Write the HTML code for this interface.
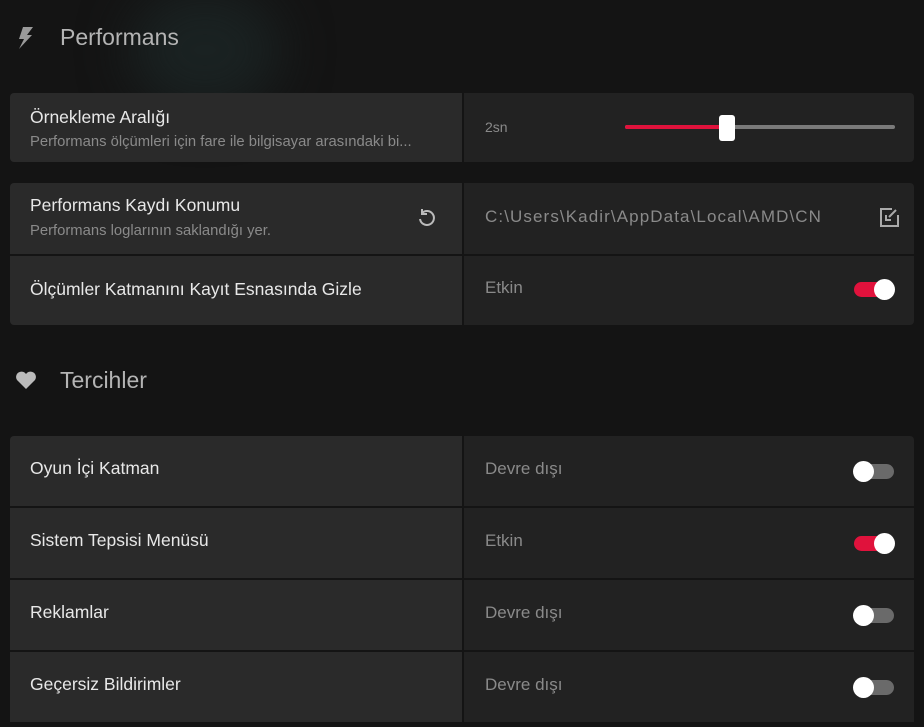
<!DOCTYPE html>
<html><head><style>
*{margin:0;padding:0;box-sizing:border-box}
body{width:924px;height:727px;overflow:hidden;background:#141414;font-family:"Liberation Sans",sans-serif;position:relative}
.bg{position:absolute;left:130px;top:-10px;width:150px;height:120px;border-radius:50%;background:#1a2222;filter:blur(25px)}
.h{position:absolute;left:60px;font-size:23px;color:#b4b4b4}
.ic{position:absolute;left:15px}
.row{position:absolute;left:10px;width:904px;height:70px}
.l{position:absolute;left:0;top:0;width:452px;height:100%;background:#2a2a2a}
.r{position:absolute;left:454px;top:0;width:450px;height:100%;background:#222}
.t{position:absolute;left:20px;font-size:17.5px;color:#e8e8e8}
.s{position:absolute;left:20px;font-size:14.8px;color:#8a8a8a}
.v{position:absolute;left:21px;font-size:17px;color:#8a8a8a;top:23px}
.tg{position:absolute;right:20px;top:28px;width:40px;height:15px;border-radius:8px;background:#6a6a6a}
.tg.on{background:#e0123c}
.tg i{position:absolute;top:-3px;width:21px;height:21px;border-radius:50%;background:#fff;left:-1px}
.tg.on i{left:20px}
</style></head><body>
<div class="bg"></div>
<svg class="ic" style="top:26px" width="20" height="24" viewBox="0 0 20 24"><path d="M8 1h10l-6 8h5L4 23l5-10H4z" fill="#9a9a9a"/></svg>
<div class="h" style="top:24px">Performans</div>

<div class="row" style="top:93px;height:69px;border-radius:4px;overflow:hidden">
<div class="l"><div class="t" style="top:14px">Örnekleme Aralığı</div><div class="s" style="top:41px">Performans ölçümleri için fare ile bilgisayar arasındaki bi...</div></div>
<div class="r"><div class="v" style="font-size:14px;top:26px">2sn</div>
<div style="position:absolute;left:161px;top:32px;width:270px;height:4px;border-radius:2px;background:#7a7a7a"></div>
<div style="position:absolute;left:161px;top:32px;width:102px;height:4px;border-radius:2px;background:#e0123c"></div>
<div style="position:absolute;left:255px;top:22px;width:16px;height:26px;border-radius:3px;background:#fff"></div></div>
</div>

<div class="row" style="top:183px;height:71px;border-radius:4px 4px 0 0;overflow:hidden">
<div class="l"><div class="t" style="top:12px">Performans Kaydı Konumu</div><div class="s" style="top:40px">Performans loglarının saklandığı yer.</div>
<svg style="position:absolute;left:406px;top:24px" width="22" height="22" viewBox="0 0 22 22" fill="none" stroke="#bbb" stroke-width="2"><path d="M6 6A7 7 0 1 1 4 12"/><path d="M6 2v5h5" /></svg></div>
<div class="r"><div class="v" style="top:24px;letter-spacing:1.1px">C:\Users\Kadir\AppData\Local\AMD\CN</div>
<svg style="position:absolute;left:414px;top:24px" width="22" height="22" viewBox="0 0 22 22" fill="none" stroke="#aaa" stroke-width="2"><path d="M14 2H3v17h17V8"/><path d="M18 3l-7 7M8 8v5h5"/></svg></div>
</div>
<div class="row" style="top:256px;height:69px;border-radius:0 0 4px 4px;overflow:hidden">
<div class="l"><div class="t" style="top:23px">Ölçümler Katmanını Kayıt Esnasında Gizle</div></div>
<div class="r"><div class="v" style="top:22px">Etkin</div><div class="tg on" style="top:26px"><i></i></div></div>
</div>

<svg class="ic" style="top:370px" width="22" height="20" viewBox="0 0 22 20"><path d="M11 19L2 10A5 5 0 0 1 11 4a5 5 0 0 1 9 6z" fill="#bbb"/></svg>
<div class="h" style="top:367px">Tercihler</div>

<div class="row" style="top:436px;border-radius:4px 4px 0 0;overflow:hidden"><div class="l"><div class="t" style="top:22px">Oyun İçi Katman</div></div><div class="r"><div class="v">Devre dışı</div><div class="tg"><i></i></div></div></div>
<div class="row" style="top:508px"><div class="l"><div class="t" style="top:22px">Sistem Tepsisi Menüsü</div></div><div class="r"><div class="v">Etkin</div><div class="tg on"><i></i></div></div></div>
<div class="row" style="top:580px"><div class="l"><div class="t" style="top:22px">Reklamlar</div></div><div class="r"><div class="v">Devre dışı</div><div class="tg"><i></i></div></div></div>
<div class="row" style="top:652px"><div class="l"><div class="t" style="top:22px">Geçersiz Bildirimler</div></div><div class="r"><div class="v">Devre dışı</div><div class="tg"><i></i></div></div></div>
</body></html>
